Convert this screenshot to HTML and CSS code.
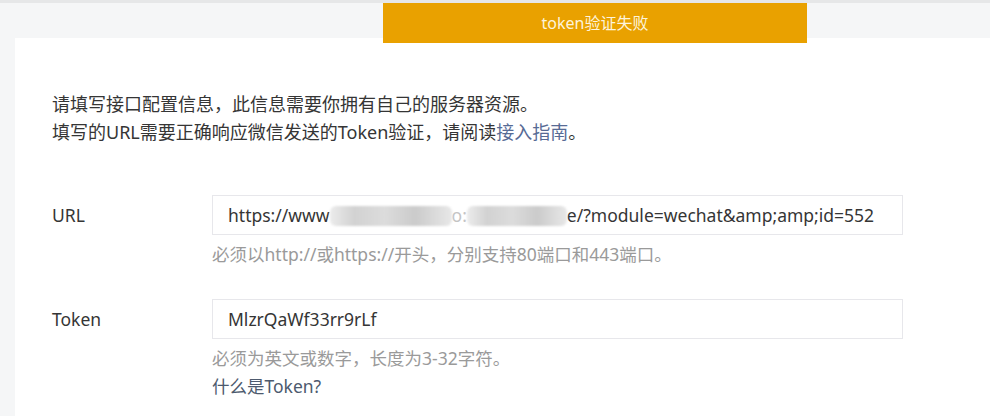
FILE: index.html
```html
<!DOCTYPE html>
<html lang="zh-CN">
  <head>
    <meta charset="UTF-8" />
    <meta name="viewport" content="width=device-width, initial-scale=1.0" />
    <title>服务器配置</title>
    <link rel="stylesheet" href="styles.css">
  </head>
  <body>
    <div class="toast">token验证失败</div>
    <header class="topbar"></header>
    <main class="card">
      <p class="intro">
        请填写接口配置信息，此信息需要你拥有自己的服务器资源。<br>
        填写的URL需要正确响应微信发送的Token验证，请阅读<a class="link" href="#">接入指南</a>。
      </p>

      <div class="field">
        <label class="field-label">URL</label>
        <div class="field-body">
          <div class="input">https://www<span class="blur blur-a"></span><span class="hidden-char">o:</span><span class="blur blur-b"></span>e/?module=wechat&amp;amp;amp;id=552</div>
          <p class="hint">必须以http://或https://开头，分别支持80端口和443端口。</p>
        </div>
      </div>

      <div class="field field-token">
        <label class="field-label">Token</label>
        <div class="field-body">
          <div class="input">MlzrQaWf33rr9rLf</div>
          <p class="hint">必须为英文或数字，长度为3-32字符。</p>
          <a class="help" href="#">什么是Token?</a>
        </div>
      </div>
    </main>
  </body>
</html>
```

FILE: styles.css
```css
*,
*::after,
*::before {
  box-sizing: border-box;
}

body {
  margin: 0;
  background-color: #f5f6f7;
  border-top: 3px solid #e6e7e8;
  font-family: "Noto Sans", "Noto Sans CJK SC", sans-serif;
  color: #353535;
  height: 416px;
  overflow: hidden;
}

/* barra superior gris */
.topbar {
  height: 35px;
}

/* aviso naranja que cae sobre la página */
.toast {
  position: absolute;
  top: 3px;
  left: 383px;
  width: 424px;
  height: 40px;
  background-color: #e9a100;
  color: #fdf4dc;
  font-size: 16px;
  line-height: 40px;
  text-align: center;
}

.card {
  margin-left: 15px;
  background-color: #fff;
  height: 400px;
  padding: 52px 0 0 37px;
}

.intro {
  margin: 0;
  font-size: 18px;
  line-height: 28px;
}

.link,
.help {
  color: #576b95;
  text-decoration: none;
}

.field {
  display: flex;
  margin-top: 49px;
}

.field-token {
  margin-top: 31px;
}

.field-label {
  width: 160px;
  font-size: 17.5px;
  line-height: 40px;
}

.field-body {
  width: 691px;
}

.input {
  height: 40px;
  border: 1px solid #e7e7eb;
  padding: 0 15px;
  font-size: 17.5px;
  line-height: 38px;
  white-space: nowrap;
  overflow: hidden;
}

.blur {
  display: inline-block;
  height: 20px;
  vertical-align: -4px;
  border-radius: 6px;
  background: linear-gradient(90deg, #ececec, #d2d2d2 20%, #dcdcdc 45%, #cbcbcb 70%, #e8e8e8);
  filter: blur(1px);
}

.blur-a {
  width: 122px;
}

.blur-b {
  width: 100px;
}

.hidden-char {
  color: #c4c4c4;
}

.hint {
  margin: 5px 0 0;
  font-size: 17.5px;
  line-height: 28px;
  color: #9a9a9a;
}

.help {
  display: block;
  font-size: 17.5px;
  line-height: 28px;
  color: #4d5a6e;
}
```
